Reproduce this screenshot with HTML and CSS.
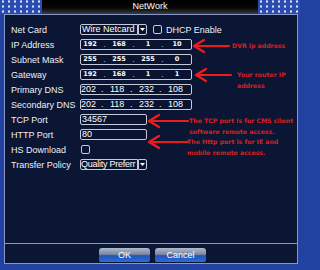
FILE: index.html
```html
<!DOCTYPE html>
<html>
<head>
<meta charset="utf-8">
<title>NetWork</title>
<link rel="stylesheet" href="styles.css">
</head>
<body>
<div class="screen">
  <div class="titlebar">
    <div class="dots"></div>
    <div class="title">NetWork</div>
    <div class="dots"></div>
  </div>
  <div class="panel">
    <div class="form">
      <div class="row">
        <span class="label">Net Card</span>
        <div class="select">
          <span class="sel-text">Wire Netcard</span>
          <span class="sel-btn"><svg width="5" height="3" viewBox="0 0 5 3"><polygon points="0,0 5,0 2.5,3" fill="#fff"/></svg></span>
        </div>
        <span class="check"></span>
        <span class="check-label">DHCP Enable</span>
      </div>
      <div class="row">
        <span class="label">IP Address</span>
        <div class="field ip bold">
          <span class="seg">192</span><span class="sep">.</span><span class="seg">168</span><span class="sep">.</span><span class="seg">1</span><span class="sep">.</span><span class="seg">10</span>
        </div>
      </div>
      <div class="row">
        <span class="label">Subnet Mask</span>
        <div class="field ip bold">
          <span class="seg">255</span><span class="sep">.</span><span class="seg">255</span><span class="sep">.</span><span class="seg">255</span><span class="sep">.</span><span class="seg">0</span>
        </div>
      </div>
      <div class="row">
        <span class="label">Gateway</span>
        <div class="field ip bold">
          <span class="seg">192</span><span class="sep">.</span><span class="seg">168</span><span class="sep">.</span><span class="seg">1</span><span class="sep">.</span><span class="seg">1</span>
        </div>
      </div>
      <div class="row">
        <span class="label">Primary DNS</span>
        <div class="field ip plain">
          <span class="seg">202</span><span class="sep">.</span><span class="seg">118</span><span class="sep">.</span><span class="seg">232</span><span class="sep">.</span><span class="seg">108</span>
        </div>
      </div>
      <div class="row">
        <span class="label">Secondary DNS</span>
        <div class="field ip plain">
          <span class="seg">202</span><span class="sep">.</span><span class="seg">118</span><span class="sep">.</span><span class="seg">232</span><span class="sep">.</span><span class="seg">108</span>
        </div>
      </div>
      <div class="row">
        <span class="label">TCP Port</span>
        <div class="field short">34567</div>
      </div>
      <div class="row">
        <span class="label">HTTP Port</span>
        <div class="field short">80</div>
      </div>
      <div class="row">
        <span class="label">HS Download</span>
        <span class="check flush"></span>
      </div>
      <div class="row">
        <span class="label">Transfer Policy</span>
        <div class="select">
          <span class="sel-text tight">Quality Preferr</span>
          <span class="sel-btn"><svg width="5" height="3" viewBox="0 0 5 3"><polygon points="0,0 5,0 2.5,3" fill="#fff"/></svg></span>
        </div>
      </div>
    </div>
    <div class="footer">
      <button class="btn">OK</button>
      <button class="btn">Cancel</button>
    </div>
  </div>

  <div class="notes">
    <svg class="arrows" width="300" height="270" viewBox="0 0 300 270">
      <g stroke="#ec1c1c" fill="none" stroke-linecap="round" stroke-linejoin="round">
        <line x1="195" y1="46" x2="229" y2="46" stroke-width="2"/>
        <polyline points="204,40 194,46 204,52" stroke-width="2.4"/>
        <line x1="197" y1="75" x2="231" y2="75" stroke-width="2"/>
        <polyline points="206,69 196,75 206,81" stroke-width="2.4"/>
        <line x1="150" y1="121" x2="188" y2="121" stroke-width="2"/>
        <polyline points="159,115 149,121 159,127" stroke-width="2.4"/>
        <line x1="150" y1="142" x2="188" y2="142" stroke-width="2"/>
        <polyline points="159,136 149,142 159,148" stroke-width="2.4"/>
      </g>
    </svg>
    <p class="note n-dvr">DVR ip address</p>
    <p class="note n-router">Your router IP<br>address</p>
    <p class="note n-tcp">The TCP port is for CMS client<br>software remote access.</p>
    <p class="note n-http">The Http port is for IE and<br>mobile remote access.</p>
  </div>
</div>
</body>
</html>
```
FILE: styles.css
```css
* {
  box-sizing: border-box;
}

html,
body {
  margin: 0;
  padding: 0;
}

body {
  width: 300px;
  height: 270px;
  overflow: hidden;
  background: #2142a0;
  font-family: "Liberation Sans", Arial, sans-serif;
  color: #eef0f6;
}

.screen {
  position: relative;
  width: 300px;
  height: 270px;
}

.titlebar {
  display: flex;
  height: 14px;
}

.dots {
  width: 42px;
  background-color: #2a4cb0;
  background-image: radial-gradient(circle, #dde3fa 0.9px, rgba(255, 255, 255, 0) 1.4px);
  background-size: 6px 5px;
  background-position: 0 -1px;
}

.title {
  flex: 1;
  background: linear-gradient(#000 0%, #060606 55%, #3c3c3c 100%);
  color: #fff;
  font-size: 9px;
  line-height: 13px;
  text-align: center;
}

.panel {
  position: relative;
  display: flex;
  flex-direction: column;
  height: 250px;
  margin: 0 2px 0 4px;
  border: 1px solid #8796c4;
  background: #0b1534;
}

.form {
  flex: 1;
  padding: 7px 0 0 6px;
}

.row {
  display: flex;
  align-items: center;
  height: 15px;
}

.label {
  width: 69px;
  font-size: 9px;
  white-space: nowrap;
}

.field {
  display: flex;
  align-items: center;
  height: 11px;
  border: 1px solid #c6cad8;
  border-radius: 2px;
  background: #0a1430;
  font-size: 9px;
  line-height: 9px;
  color: #fff;
}

.ip {
  width: 112px;
}

.short {
  width: 67px;
  padding-left: 1px;
}

.seg {
  width: 18px;
}

.sep {
  width: 11px;
}

.bold .seg {
  text-align: center;
  font-family: "DejaVu Sans", Verdana, sans-serif;
  font-weight: bold;
  font-size: 6.5px;
}

.bold .sep {
  text-align: center;
  font-size: 7px;
}

.plain .seg {
  text-align: left;
}

.plain .sep {
  padding-left: 2px;
}

.select {
  display: flex;
  width: 67px;
  height: 11px;
}

.sel-text {
  flex: 1;
  padding-left: 1px;
  border: 1px solid #c6cad8;
  border-radius: 2px 0 0 2px;
  background: #0a1430;
  color: #fff;
  font-size: 9px;
  line-height: 9px;
  white-space: nowrap;
}

.sel-text.tight {
  padding-left: 0;
  letter-spacing: -0.25px;
}

.sel-btn {
  display: flex;
  align-items: center;
  justify-content: center;
  width: 9px;
  border: 1px solid #c6cad8;
  border-radius: 0 2px 2px 0;
  background: #0a1430;
}

.check {
  width: 9px;
  height: 9px;
  margin-left: 6px;
  border: 1px solid #c8ccd8;
  border-radius: 2px;
  background: #0a1430;
}

.check.flush {
  margin-left: 1px;
}

.check-label {
  margin-left: 4px;
  font-size: 9px;
}

.footer {
  display: flex;
  gap: 5px;
  height: 20px;
  padding: 4px 0 1px 94px;
  border-top: 1px solid #8a98b8;
}

.btn {
  width: 51px;
  height: 14px;
  padding: 0;
  border: none;
  border-radius: 3px 3px 2px 2px;
  background: linear-gradient(#aeb9ca 0%, #7c8aa0 45%, #2254b6 55%, #2f6cd8 100%);
  color: #fff;
  font-family: "Liberation Sans", Arial, sans-serif;
  font-size: 9px;
  line-height: 12px;
}

.notes {
  position: absolute;
  left: 0;
  top: 0;
  width: 300px;
  height: 270px;
  pointer-events: none;
}

.arrows {
  position: absolute;
  left: 0;
  top: 0;
}

.note {
  position: absolute;
  margin: 0;
  color: #d82020;
  font-family: "DejaVu Sans", Verdana, sans-serif;
  font-weight: bold;
  font-size: 6.2px;
  line-height: 11px;
  white-space: nowrap;
}

.n-dvr {
  left: 232px;
  top: 40px;
}

.n-router {
  left: 237px;
  top: 69px;
}

.n-tcp {
  left: 189px;
  top: 115px;
}

.n-http {
  left: 187px;
  top: 137px;
  line-height: 10.5px;
}
```
